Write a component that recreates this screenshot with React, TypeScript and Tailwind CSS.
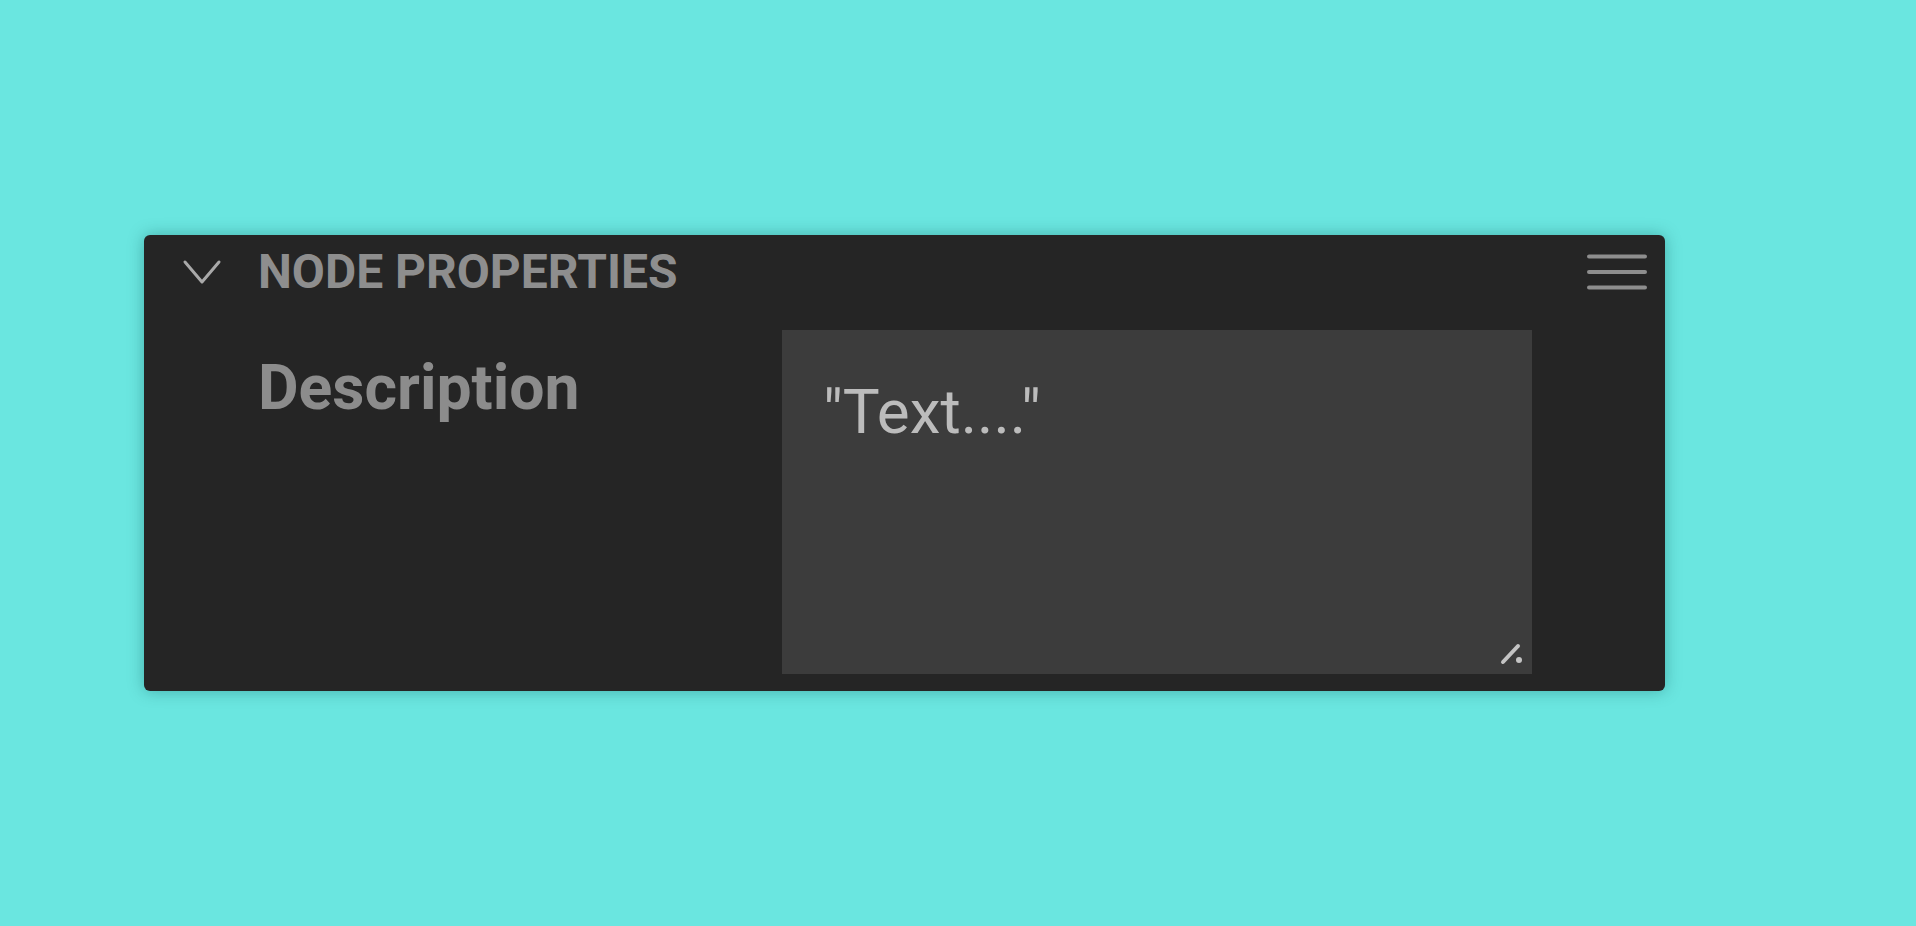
import { useState } from "react";

function Chevron() {
  return (
    <svg width="40" height="26" viewBox="0 0 40 26" fill="none">
      <path d="M3 3 L20 23 L37 3" stroke="#a9a9a9" strokeWidth="3" strokeLinecap="round" strokeLinejoin="round" />
    </svg>
  );
}

function MenuIcon() {
  return (
    <svg width="60" height="36" viewBox="0 0 60 36" fill="none">
      <line x1="2" y1="2.5" x2="58" y2="2.5" stroke="#8e8e8e" strokeWidth="4" strokeLinecap="round" />
      <line x1="2" y1="18" x2="58" y2="18" stroke="#8e8e8e" strokeWidth="4" strokeLinecap="round" />
      <line x1="2" y1="33.5" x2="58" y2="33.5" stroke="#8e8e8e" strokeWidth="4" strokeLinecap="round" />
    </svg>
  );
}

function ResizeGrip() {
  return (
    <svg width="24" height="24" viewBox="0 0 24 24" fill="none">
      <line x1="3" y1="21" x2="18" y2="5" stroke="#c4c4c4" strokeWidth="4" strokeLinecap="round" />
      <circle cx="19" cy="19" r="3" fill="#c4c4c4" />
    </svg>
  );
}

export default function App() {
  const [text, setText] = useState('"Text...."');

  return (
    <div className="min-h-[926px] w-full bg-[#6ae6e0] pl-[144px] pt-[235px] font-['Roboto',sans-serif]">
      <div className="flex h-[456px] w-[1521px] flex-col rounded-[6px] bg-[#252525] pt-[8px] shadow-[0_0_16px_rgba(0,70,70,0.35)]">
        <div className="flex h-[57px] items-center pl-[38px] pr-[18px]">
          <Chevron />
          <div className="ml-[36px] text-[48px] font-bold leading-[56px] text-[#8e8e8e]">
            NODE PROPERTIES
          </div>
          <div className="ml-auto">
            <MenuIcon />
          </div>
        </div>

        <div className="mt-[30px] flex">
          <div className="w-[638px] pl-[114px] pt-[21px] text-[62.5px] font-bold leading-[73px] text-[#8c8c8c]">
            Description
          </div>
          <div className="relative h-[344px] w-[750px]">
            <textarea
              value={text}
              onChange={(e) => setText(e.target.value)}
              className="h-full w-full resize-none bg-[#3c3c3c] pl-[41px] pt-[45px] text-[62px] leading-[73px] text-[#bcbcbc] outline-none"
            />
            <div className="pointer-events-none absolute bottom-[9px] right-[8px]">
              <ResizeGrip />
            </div>
          </div>
        </div>
      </div>
    </div>
  );
}
